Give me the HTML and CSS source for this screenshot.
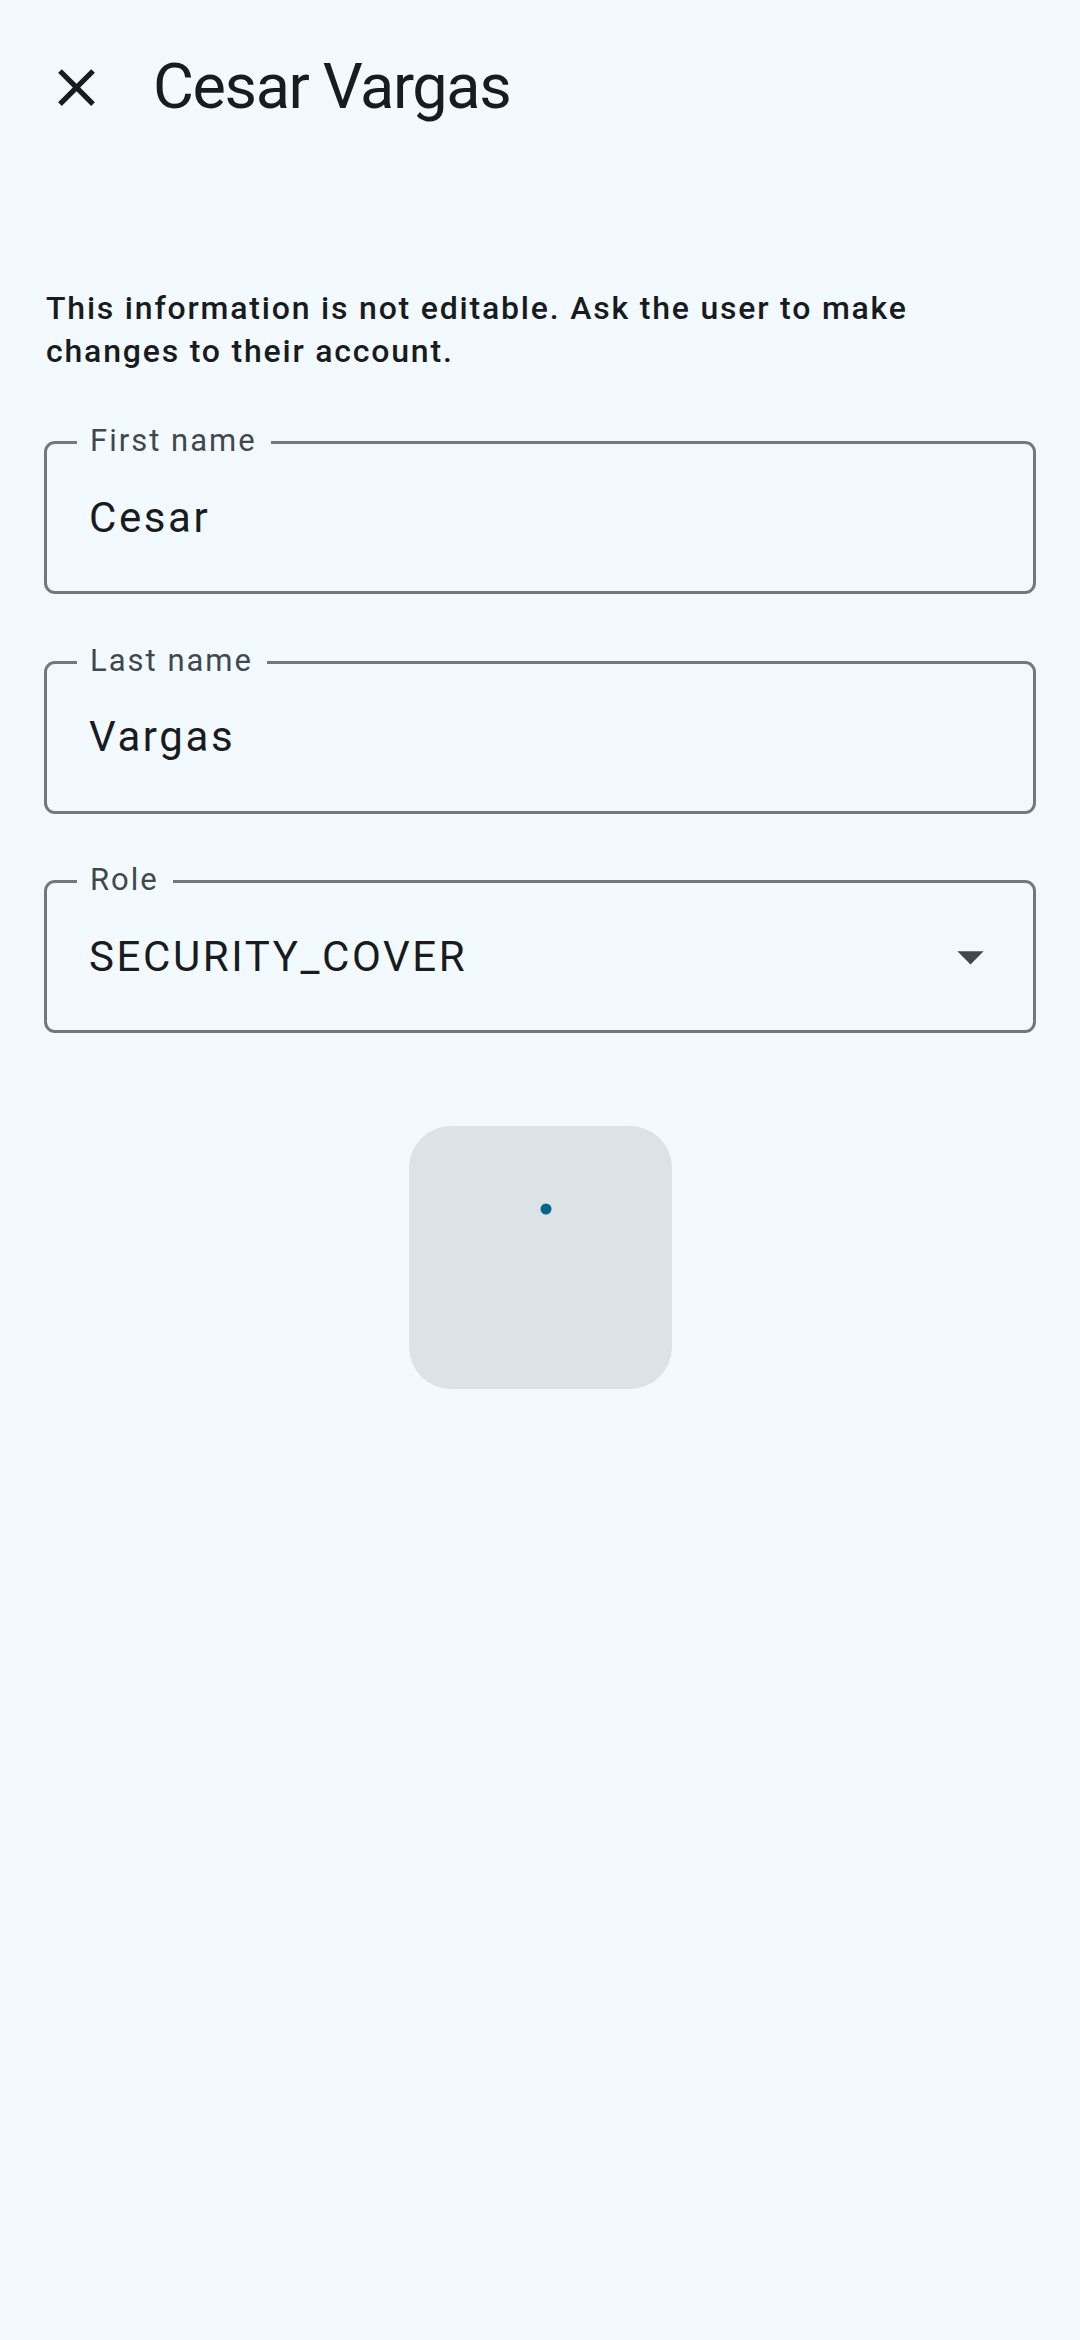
FILE: index.html
```html
<!DOCTYPE html>
<html lang="en">
<head>
<meta charset="utf-8">
<title>Cesar Vargas</title>
<link rel="stylesheet" href="styles.css">
</head>
<body>
<header class="topbar">
  <button class="icon-btn" aria-label="Close">
    <svg viewBox="0 0 24 24" width="63" height="63"><path fill="#191c1e" d="M19 6.41L17.59 5 12 10.59 6.41 5 5 6.41 10.59 12 5 17.59 6.41 19 12 13.41 17.59 19 19 17.59 13.41 12z"/></svg>
  </button>
  <h1 class="title">Cesar Vargas</h1>
</header>
<main class="content">
  <p class="notice">This information is not editable. Ask the user to make changes to their account.</p>
  <div class="field">
    <span class="field-label">First name</span>
    <span class="field-value">Cesar</span>
  </div>
  <div class="field">
    <span class="field-label">Last name</span>
    <span class="field-value">Vargas</span>
  </div>
  <div class="field field-select">
    <span class="field-label">Role</span>
    <span class="field-value">SECURITY_COVER</span>
    <svg class="drop-icon" viewBox="0 0 24 24" width="63" height="63"><path fill="#41484d" d="M7 10l5 5 5-5z"/></svg>
  </div>
  <div class="loader-box">
    <svg viewBox="0 0 263 263" width="263" height="263"><circle cx="137" cy="83" r="5.5" fill="#00668a"/></svg>
  </div>
</main>
</body>
</html>
```
FILE: styles.css
```css
html, body {
  margin: 0;
  padding: 0;
}
body {
  background: #f3faff;
  font-family: Roboto, "Noto Sans", sans-serif;
  color: #191c1e;
  min-height: 2340px;
}
.topbar {
  height: 174px;
  display: flex;
  align-items: center;
  padding-left: 45px;
  box-sizing: border-box;
}
.icon-btn {
  width: 63px;
  height: 63px;
  padding: 0;
  margin: 0;
  border: 0;
  background: none;
  display: flex;
}
.title {
  margin: 0 0 0 45px;
  font-size: 63px;
  line-height: 74px;
  font-weight: 400;
  letter-spacing: -1.4px;
  color: #191c1e;
}
.content {
  padding: 0 44px;
  display: flex;
  flex-direction: column;
}
.notice {
  margin: 113px 0 0 2px;
  font-size: 32px;
  line-height: 43px;
  font-weight: 500;
  letter-spacing: 1.8px;
  color: #191c1e;
}
.field {
  position: relative;
  height: 153px;
  box-sizing: border-box;
  border: 3px solid #72787e;
  border-radius: 11px;
  margin-top: 66.5px;
  display: flex;
  align-items: center;
  padding-left: 42px;
}
.notice + .field {
  margin-top: 68px;
}
.field-label {
  position: absolute;
  left: 30px;
  top: -21px;
  padding: 0 14px 0 13px;
  background: #f3faff;
  font-size: 31px;
  line-height: 36px;
  letter-spacing: 2px;
  color: #41484d;
}
.field-value {
  font-size: 42px;
  line-height: 50px;
  letter-spacing: 2.6px;
  color: #191c1e;
  flex: 1;
}
.field-select {
  padding-right: 31px;
}
.drop-icon {
  flex: none;
}
.loader-box {
  width: 263px;
  height: 263px;
  border-radius: 42px;
  background: #dce3e7;
  margin: 93px auto 0;
}
.loader-box svg {
  display: block;
}
```
